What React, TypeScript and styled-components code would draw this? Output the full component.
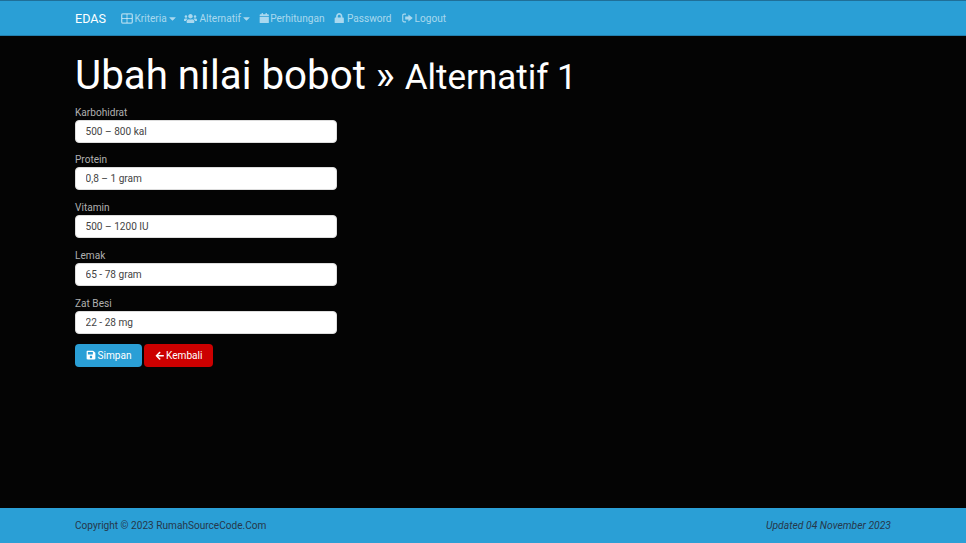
import React from "react";
import styled, { createGlobalStyle } from "styled-components";
import { FaArrowLeft, FaCalendar, FaCaretDown, FaLock, FaSave, FaUsers } from "react-icons/fa";

const fields = [
  { label: "Karbohidrat", value: "500 – 800 kal" },
  { label: "Protein", value: "0,8 – 1 gram" },
  { label: "Vitamin", value: "500 – 1200 IU" },
  { label: "Lemak", value: "65 - 78 gram" },
  { label: "Zat Besi", value: "22 - 28 mg" },
];

const TableIcon = () => (
  <svg width="12" height="11" viewBox="0 0 12 11" fill="none" stroke="currentColor" strokeWidth="1.3">
    <rect x="0.7" y="0.9" width="10.6" height="9.2" rx="1" />
    <path d="M6 1v9M1 5.500h10" strokeWidth="1" />
  </svg>
);

const LogoutIcon = () => (
  <svg width="11" height="10" viewBox="0 0 11 10">
    <path d="M4 .6v1.1H2.100c-.5 0-.8.3-.8.8v5c0 .5.3.8.8.8H4v1.100H2C.9 9.400.2 8.700.2 7.600V2.400C.2 1.300.9.600 2 .600z" fill="currentColor" />
    <path d="M6.400 1.500 10.800 5 6.400 8.500V6.500H3.200v-3h3.200z" fill="currentColor" />
  </svg>
);

const App = () => {
  return (
    <Page>
      <GlobalStyle />
      <Navbar>
        <Brand>EDAS</Brand>
        <NavItem><TableIcon />Kriteria<CaretIcon /></NavItem>
        <NavItem><FaUsers size={13} />Alternatif<CaretIcon /></NavItem>
        <NavItem><CalendarIcon size={10.500} />Perhitungan</NavItem>
        <NavItem><FaLock size={10.500} />Password</NavItem>
        <NavItem><LogoutIcon />Logout</NavItem>
      </Navbar>
      <Main>
        <Heading>
          Ubah nilai bobot » <small>Alternatif 1</small>
        </Heading>
        <Form>
          {fields.map((field) => (
            <Field key={field.label}>
              <Label>{field.label}</Label>
              <Input readOnly value={field.value} />
            </Field>
          ))}
          <Actions>
            <Button color="#2a9fd6"><FaSave size={10} />Simpan</Button>
            <Button color="#cc0000"><FaArrowLeft size={9.500} />Kembali</Button>
          </Actions>
        </Form>
      </Main>
      <Footer>
        <span>Copyright © 2023 RumahSourceCode.Com</span>
        <em>Updated 04 November 2023</em>
      </Footer>
    </Page>
  );
};

const GlobalStyle = createGlobalStyle`
  html, body {
    margin: 0;
    background: #000;
  }
  * {
    box-sizing: border-box;
  }
`;

const Page = styled.div`
  height: 543px;
  display: flex;
  flex-direction: column;
  background: #040404;
  font-family: Roboto, sans-serif;
  font-size: 10.1px;
`;

const Navbar = styled.nav`
  height: 36px;
  padding: 0 75px;
  display: flex;
  align-items: center;
  background: #2a9fd6;
  border-top: 1px solid #1f6f98;
  border-bottom: 1px solid #237fae;
`;

const Brand = styled.span`
  color: #fff;
  font-size: 12.600px;
  margin-right: 14.500px;
`;

const NavItem = styled.span`
  display: flex;
  align-items: center;
  gap: 2px;
  margin-right: 10px;
  color: rgba(255, 255, 255, 0.6);
`;

const CaretIcon = styled(FaCaretDown)`
  width: 11px;
  height: 11px;
  margin-left: -2px;
  margin-right: -3.250px;
`;

const CalendarIcon = styled(FaCalendar)`
  margin-right: -1px;
`;

const Main = styled.main`
  flex: 1;
  padding: 0 75px;
`;

const Heading = styled.h1`
  margin: 15px 0 0;
  color: #fff;
  font-size: 40.300px;
  font-weight: 400;
  line-height: 50px;

  small {
    font-size: 35px;
  }
`;

const Form = styled.form`
  width: 262px;
  margin-top: 2.500px;
`;

const Field = styled.div`
  margin-bottom: 10.750px;
`;

const Label = styled.label`
  display: block;
  color: #b0b0b0;
  line-height: 14px;
`;

const Input = styled.input`
  display: block;
  width: 100%;
  height: 23px;
  padding: 0 9.500px;
  border: 1px solid #ddd;
  border-radius: 4px;
  background: #fff;
  color: #444;
  font: inherit;
  outline: none;
`;

const Actions = styled.div`
  display: flex;
  gap: 2px;
  margin-top: -0.750px;
`;

const Button = styled.button<{ color: string }>`
  display: flex;
  align-items: center;
  gap: 2px;
  height: 23.500px;
  padding: 0 10.500px;
  border: 0;
  border-radius: 4px;
  background: ${(props) => props.color};
  color: #fff;
  font: inherit;
`;

const Footer = styled.footer`
  height: 35px;
  padding: 0 75px;
  display: flex;
  align-items: center;
  justify-content: space-between;
  background: #2a9fd6;
  color: #26374a;

  em {
    font-size: 10.350px;
  }
`;

export default App;
